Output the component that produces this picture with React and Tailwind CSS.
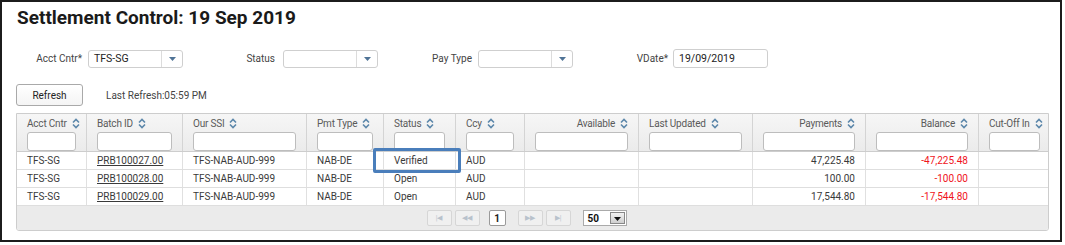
import React from "react";

const columns = [
  { key: "acct", label: "Acct Cntr", w: "w-[70px]" },
  { key: "batch", label: "Batch ID", w: "w-[96px]" },
  { key: "ssi", label: "Our SSI", w: "w-[124px]" },
  { key: "pmt", label: "Pmt Type", w: "w-[77px]" },
  { key: "status", label: "Status", w: "w-[72px]" },
  { key: "ccy", label: "Ccy", w: "w-[69px]" },
  { key: "avail", label: "Available", w: "w-[114px]", right: true },
  { key: "updated", label: "Last Updated", w: "w-[114px]" },
  { key: "payments", label: "Payments", w: "w-[113px]", right: true },
  { key: "balance", label: "Balance", w: "w-[113px]", right: true },
  { key: "cutoff", label: "Cut-Off In", w: "w-[71px]" },
];

const rows = [
  { acct: "TFS-SG", batch: "PRB100027.00", ssi: "TFS-NAB-AUD-999", pmt: "NAB-DE", status: "Verified", ccy: "AUD", avail: "", updated: "", payments: "47,225.48", balance: "-47,225.48", cutoff: "" },
  { acct: "TFS-SG", batch: "PRB100028.00", ssi: "TFS-NAB-AUD-999", pmt: "NAB-DE", status: "Open", ccy: "AUD", avail: "", updated: "", payments: "100.00", balance: "-100.00", cutoff: "" },
  { acct: "TFS-SG", batch: "PRB100029.00", ssi: "TFS-NAB-AUD-999", pmt: "NAB-DE", status: "Open", ccy: "AUD", avail: "", updated: "", payments: "17,544.80", balance: "-17,544.80", cutoff: "" },
];

const SortIcon = () => (
  <svg width="8" height="11" viewBox="0 0 8 11" className="shrink-0">
    <path d="M1 4.5 L4 1.5 L7 4.5" fill="none" stroke="#5c87aa" strokeWidth="1.6" />
    <path d="M1 6.5 L4 9.5 L7 6.5" fill="none" stroke="#5c87aa" strokeWidth="1.6" />
  </svg>
);

const Select = ({ value }) => (
  <div className="flex h-[18px] w-[95px] items-stretch rounded-[3px] border border-[#cfcfcf] bg-white">
    <div className="flex flex-1 items-center pl-[5px] text-[10.5px] text-[#222]">{value}</div>
    <div className="flex w-[21px] items-center justify-center border-l border-[#dcdcdc]">
      <svg width="7" height="4" viewBox="0 0 7 4">
        <path d="M0 0 L7 0 L3.5 4 Z" fill="#4f7396" />
      </svg>
    </div>
  </div>
);

const PagerButton = ({ children }) => (
  <div className="flex h-[16px] w-[25px] items-center justify-center rounded-[2px] border border-[#d6d6d6] bg-[#f0f0f0] text-[7px] text-[#b8c2cc]">
    {children}
  </div>
);

export default function App() {
  return (
    <div className="relative h-[245px] w-[1065px] bg-white" style={{ fontFamily: "Roboto, 'Liberation Sans', sans-serif" }}>
      <div className="h-[242px] w-[1062px] border-2 border-[#1c1c1c] bg-white">
        <h1 className="ml-[15px] mt-[5px] text-[19px] font-bold leading-[22px] text-[#1a1a1a]">
          Settlement Control: 19 Sep 2019
        </h1>

        <div className="mt-[20px] flex items-center text-[10px] text-[#444]">
          <div className="w-[86px] pr-[6px] text-right">Acct Cntr*</div>
          <Select value="TFS-SG" />
          <div className="w-[100px] pr-[8px] text-right">Status</div>
          <Select value="" />
          <div className="w-[100px] pr-[6px] text-right">Pay Type</div>
          <Select value="" />
          <div className="w-[100px] pr-[5px] text-right">VDate*</div>
          <div className="flex h-[19px] w-[95px] items-center rounded-[3px] border border-[#cfcfcf] bg-white pl-[5px] text-[10.5px] text-[#222]">
            19/09/2019
          </div>
        </div>

        <div className="ml-[14px] mt-[16px] flex items-center">
          <button className="h-[22px] w-[67px] rounded-[3px] border border-[#a9a9a9] bg-gradient-to-b from-white to-[#f4f4f4] text-[10px] text-[#222]">
            Refresh
          </button>
          <span className="ml-[23px] text-[10px] text-[#444]">Last Refresh:05:59 PM</span>
        </div>

        <div className="ml-[14px] mt-[7px] w-[1033px] overflow-hidden rounded-b-[3px] border border-[#cdcdcd]">
          <div className="flex h-[38px] border-b border-[#cdcdcd] bg-gradient-to-b from-[#f6f6f6] to-[#ebebeb]">
            {columns.map((c, i) => (
              <div key={c.key} className={`${c.w} shrink-0 px-[10px] pt-[3px] ${i < columns.length - 1 ? "border-r border-[#d4d4d4]" : ""}`}>
                <div className={`flex h-[12px] items-center gap-[5px] whitespace-nowrap text-[10px] tracking-[-0.2px] text-[#5a5a5a] ${c.right ? "justify-end" : ""}`}>
                  <span>{c.label}</span>
                  <SortIcon />
                </div>
                <div className="mt-[3px] h-[19px] rounded-[3px] border border-[#bdbdbd] bg-white" />
              </div>
            ))}
          </div>

          {rows.map((r, ri) => (
            <div key={ri} className="flex h-[18px] border-b border-[#dedede] bg-white">
              {columns.map((c, i) => (
                <div
                  key={c.key}
                  className={`${c.w} flex shrink-0 items-center whitespace-nowrap px-[10px] text-[10px] ${c.right ? "justify-end" : ""} ${i < columns.length - 1 ? "border-r border-[#e0e0e0]" : ""} ${c.key === "balance" ? "text-[#f0141b]" : "text-[#3a3a3a]"}`}
                >
                  {c.key === "batch" ? <span className="underline">{r[c.key]}</span> : r[c.key]}
                </div>
              ))}
            </div>
          ))}

          <div className="flex h-[24px] items-center justify-center bg-[#ebebeb] pr-[12px]">
            <PagerButton>|◀</PagerButton>
            <div className="ml-[3px]"><PagerButton>◀◀</PagerButton></div>
            <div className="ml-[9px] flex h-[16px] w-[17px] items-center justify-center rounded-[2px] border border-[#9a9a9a] bg-white text-[10px] font-bold text-[#222]">
              1
            </div>
            <div className="ml-[12px]"><PagerButton>▶▶</PagerButton></div>
            <div className="ml-[3px]"><PagerButton>▶|</PagerButton></div>
            <div className="ml-[12px] flex h-[16px] w-[44px] items-center justify-between border border-[#aaa] bg-white pl-[4px] pr-[1px]">
              <span className="text-[10px] font-bold text-[#111]">50</span>
              <div className="flex h-[12px] w-[15px] items-end justify-center border border-[#888] bg-gradient-to-b from-[#f2f2f2] to-[#cfcfcf] pb-[2px]">
                <svg width="7" height="4" viewBox="0 0 7 4">
                  <path d="M0 0 L7 0 L3.5 4 Z" fill="#111" />
                </svg>
              </div>
            </div>
          </div>
        </div>
      </div>

      <div className="absolute left-[373px] top-[148px] h-[25px] w-[88px] rounded-[2px] border-[3px] border-[#4a7ebb]" />
    </div>
  );
}
